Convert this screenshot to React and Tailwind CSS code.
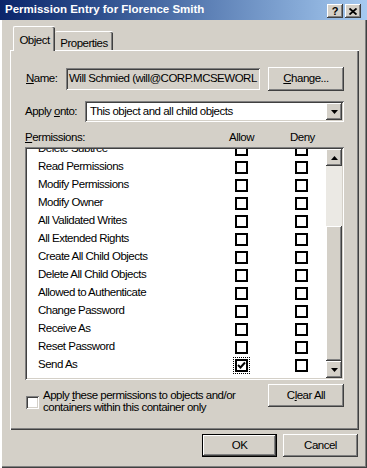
import React from "react";

const raised =
  "shadow-[inset_-1px_-1px_#404040,inset_1px_1px_#ffffff,inset_-2px_-2px_#808080,inset_2px_2px_#d4d0c8]";
const sunken =
  "shadow-[inset_1px_1px_#808080,inset_-1px_-1px_#ffffff,inset_2px_2px_#404040,inset_-2px_-2px_#d4d0c8]";

const rows = [
  "Delete Subtree",
  "Read Permissions",
  "Modify Permissions",
  "Modify Owner",
  "All Validated Writes",
  "All Extended Rights",
  "Create All Child Objects",
  "Delete All Child Objects",
  "Allowed to Authenticate",
  "Change Password",
  "Receive As",
  "Reset Password",
  "Send As",
];

function Box({ checked }) {
  return (
    <div className="w-[13px] h-[13px] border-2 border-black bg-white flex items-center justify-center">
      {checked && (
        <svg width="9" height="9" viewBox="0 0 9 9">
          <path d="M1 4 L3.5 6.5 L8 1.5" stroke="#000" strokeWidth="2" fill="none" />
        </svg>
      )}
    </div>
  );
}

function Arrow({ down }) {
  return (
    <svg width="7" height="4" viewBox="0 0 7 4">
      {down ? <path d="M0 0 H7 L3.5 4 Z" fill="#000" /> : <path d="M0 4 H7 L3.5 0 Z" fill="#000" />}
    </svg>
  );
}

export default function App() {
  return (
    <div
      className="w-[367px] h-[468px] bg-[#d4d0c8] flex flex-col shadow-[inset_2px_0_#ffffff,inset_-1px_-1px_#404040,inset_-2px_-2px_#808080] text-[11.5px] tracking-[-0.5px] text-black overflow-hidden whitespace-nowrap"
      style={{ fontFamily: '"Liberation Sans", Arial, sans-serif' }}
    >
      {/* Title bar */}
      <div className="h-[20px] flex items-center bg-gradient-to-r from-[#0a246a] to-[#a6caf0] pl-[5px] pr-[6px]">
        <div className="text-white font-bold text-[11.5px] tracking-normal flex-1 leading-none">
          Permission Entry for Florence Smith
        </div>
        <div className="flex gap-[2px] mt-[2px]">
          <div className={`w-[16px] h-[14px] bg-[#d4d0c8] ${raised} flex items-center justify-center font-bold text-[11px] tracking-normal leading-none`}>
            ?
          </div>
          <div className={`w-[16px] h-[14px] bg-[#d4d0c8] ${raised} flex items-center justify-center`}>
            <svg width="8" height="7" viewBox="0 0 8 7">
              <path d="M0.5 0.5 L7.5 6.5 M7.5 0.5 L0.5 6.5" stroke="#000" strokeWidth="1.8" />
            </svg>
          </div>
        </div>
      </div>

      {/* Tabs */}
      <div className="flex items-end h-[30px] pl-[13px] relative z-10">
        <div className="h-[25px] w-[42px] bg-[#d4d0c8] border-t border-l border-white shadow-[inset_-1px_0_#404040,inset_-2px_0_#808080] rounded-t-[2px] flex items-start justify-center pt-[5px] mb-[-1px]">
          Object
        </div>
        <div className="h-[19px] w-[58px] bg-[#d4d0c8] border-t border-white shadow-[inset_-1px_0_#404040,inset_-2px_0_#808080] rounded-t-[2px] flex items-start justify-center pt-[3px]">
          Properties
        </div>
      </div>

      {/* Panel */}
      <div className="ml-[10px] mr-[8px] h-[380px] border-t border-l border-white shadow-[inset_-1px_-1px_#404040,inset_-2px_-2px_#808080] flex flex-col pl-[14px] pr-[15px]">
        {/* Name row */}
        <div className="flex items-center h-[24px] mt-[16px]">
          <div className="w-[41px] pl-[1px]">
            <span className="underline">N</span>ame:
          </div>
          <div className={`w-[194px] h-[22px] bg-[#d4d0c8] ${sunken} flex items-center pl-[3px] overflow-hidden`}>
            Will Schmied (will@CORP.MCSEWORL
          </div>
          <div className="flex-1" />
          <div className={`w-[76px] h-[24px] bg-[#d4d0c8] ${raised} flex items-center justify-center`}>
            <span className="underline">C</span>hange...
          </div>
        </div>

        {/* Apply onto */}
        <div className="flex items-center h-[21px] mt-[10px]">
          <div className="w-[60px]">
            Apply <span className="underline">o</span>nto:
          </div>
          <div className={`flex-1 h-[21px] bg-white ${sunken} flex items-center pl-[5px] pr-[2px]`}>
            <div className="flex-1">This object and all child objects</div>
            <div className={`w-[16px] h-[17px] bg-[#d4d0c8] ${raised} flex items-center justify-center`}>
              <Arrow down />
            </div>
          </div>
        </div>

        {/* Permissions header */}
        <div className="flex items-center h-[14px] mt-[9px]">
          <div className="w-[204px]">
            <span className="underline">P</span>ermissions:
          </div>
          <div className="w-[61px]">Allow</div>
          <div>Deny</div>
        </div>

        {/* List box */}
        <div className={`h-[233px] mt-[2px] bg-white ${sunken} p-[2px] flex`}>
          <div className="flex-1 overflow-hidden">
            <div className="mt-[-9px]">
              {rows.map((r, i) => (
                <div key={r} className="flex items-center h-[18px]">
                  <div className="w-[208px] pl-[11px]">{r}</div>
                  <div className={i === rows.length - 1 ? "outline-1 outline-dotted outline-black outline-offset-[1px]" : ""}>
                    <Box checked={i === rows.length - 1} />
                  </div>
                  <div className="w-[47px]" />
                  <Box />
                </div>
              ))}
            </div>
          </div>
          {/* Scrollbar */}
          <div className="w-[16px] flex flex-col bg-[#ebe9e4]">
            <div className={`h-[17px] bg-[#d4d0c8] ${raised} flex items-center justify-center`}>
              <Arrow />
            </div>
            <div className="h-[60px]" />
            <div className={`flex-1 bg-[#d4d0c8] ${raised}`} />
            <div className={`h-[17px] bg-[#d4d0c8] ${raised} flex items-center justify-center`}>
              <Arrow down />
            </div>
          </div>
        </div>

        {/* Bottom row */}
        <div className="flex items-start mt-[4px]">
          <div className={`w-[13px] h-[13px] bg-white ${sunken} mt-[12px] ml-[1px]`} />
          <div className="ml-[4px] mt-[5px] leading-[12px] w-[215px]">
            Apply <span className="underline">t</span>hese permissions to objects and/or
            <br />
            containers within this container only
          </div>
          <div className="flex-1" />
          <div className={`w-[76px] h-[23px] bg-[#d4d0c8] ${raised} flex items-center justify-center`}>
            C<span className="underline">l</span>ear All
          </div>
        </div>
      </div>

      {/* OK / Cancel */}
      <div className="flex justify-end gap-[6px] mt-[4px] pr-[9px]">
        <div className="w-[75px] h-[23px] bg-[#d4d0c8] shadow-[inset_0_0_0_1px_#000000,inset_-2px_-2px_#404040,inset_2px_2px_#ffffff,inset_-3px_-3px_#808080] flex items-center justify-center">
          OK
        </div>
        <div className={`w-[75px] h-[23px] bg-[#d4d0c8] ${raised} flex items-center justify-center`}>
          Cancel
        </div>
      </div>
    </div>
  );
}
